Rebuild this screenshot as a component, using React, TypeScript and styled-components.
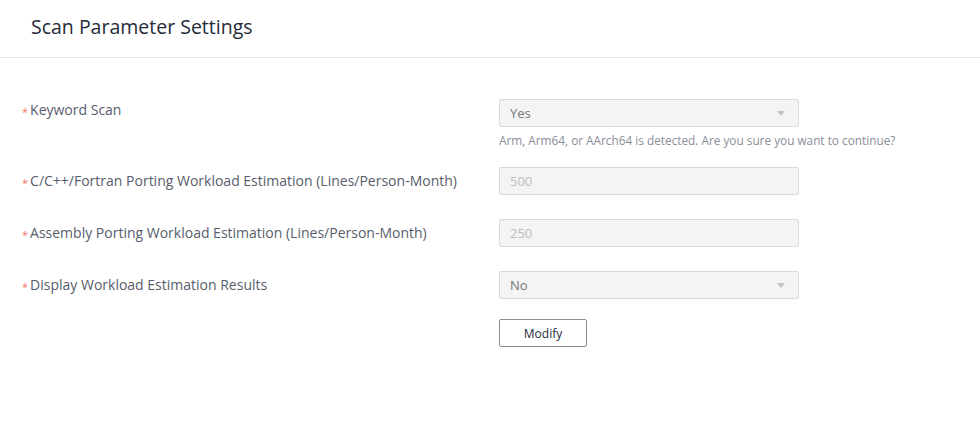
import React from "react";
import styled, { createGlobalStyle } from "styled-components";

const GlobalStyle = createGlobalStyle`
  html, body {
    margin: 0;
    padding: 0;
    background: #ffffff;
  }
  body {
    font-family: "Open Sans", "Noto Sans", sans-serif;
  }
`;

interface Field {
  label: string;
  kind: "select" | "input";
  value: string;
  hint?: string;
  spacing: number;
}

const fields: Field[] = [
  {
    label: "Keyword Scan",
    kind: "select",
    value: "Yes",
    hint: "Arm, Arm64, or AArch64 is detected. Are you sure you want to continue?",
    spacing: 0,
  },
  {
    label: "C/C++/Fortran Porting Workload Estimation (Lines/Person-Month)",
    kind: "input",
    value: "500",
    spacing: 20,
  },
  {
    label: "Assembly Porting Workload Estimation (Lines/Person-Month)",
    kind: "input",
    value: "250",
    spacing: 24,
  },
  {
    label: "Display Workload Estimation Results",
    kind: "select",
    value: "No",
    spacing: 24,
  },
];

const App: React.FC = () => {
  return (
    <Page>
      <GlobalStyle />
      <Header>
        <Title>Scan Parameter Settings</Title>
      </Header>
      <Form>
        {fields.map((field) => (
          <Row key={field.label} $spacing={field.spacing}>
            <Label $lift={field.hint ? 3 : 0}>
              <Required>*</Required>
              {field.label}
            </Label>
            <Control>
              <Box>
                <BoxText $muted={field.kind === "input"}>{field.value}</BoxText>
                {field.kind === "select" && <Caret />}
              </Box>
              {field.hint && <Hint>{field.hint}</Hint>}
            </Control>
          </Row>
        ))}
        <Row $spacing={20}>
          <Label $lift={0} />
          <Control>
            <Button type="button">Modify</Button>
          </Control>
        </Row>
      </Form>
    </Page>
  );
};

export default App;

//MARK: - Styled Components

const Page = styled.div`
  width: 980px;
  height: 431px;
  background: #ffffff;
`;

const Header = styled.header`
  height: 58px;
  box-sizing: border-box;
  padding: 13px 0 0 31px;
  border-bottom: 1px solid #e2e2e2;
`;

const Title = styled.h1`
  margin: 0;
  font-size: 19.5px;
  font-weight: 400;
  line-height: 28px;
  color: #252b3a;
`;

const Form = styled.div`
  display: flex;
  flex-direction: column;
  padding: 41px 0 0 22px;
`;

const Row = styled.div<{ $spacing: number }>`
  display: flex;
  align-items: flex-start;
  margin-top: ${(p) => p.$spacing}px;
`;

const Label = styled.div<{ $lift: number }>`
  width: 477px;
  flex-shrink: 0;
  display: flex;
  align-items: center;
  font-size: 14px;
  line-height: 28px;
  color: #575d6c;
  margin-top: ${(p) => -p.$lift}px;
`;

const Required = styled.span`
  color: #f66f6a;
  font-size: 11px;
  margin-right: 2px;
  position: relative;
  top: 2px;
`;

const Control = styled.div`
  width: 300px;
  display: flex;
  flex-direction: column;
`;

const Box = styled.div`
  height: 28px;
  box-sizing: border-box;
  border: 1px solid #d9d9d9;
  border-radius: 2px;
  background: #f4f4f4;
  display: flex;
  align-items: center;
  justify-content: space-between;
  padding: 0 13px 0 10px;
`;

const BoxText = styled.span<{ $muted: boolean }>`
  font-size: 13px;
  color: ${(p) => (p.$muted ? "#bdbdbd" : "#777777")};
`;

const Caret = styled.span`
  width: 0;
  height: 0;
  border-left: 4px solid transparent;
  border-right: 4px solid transparent;
  border-top: 5px solid #c4c4c4;
`;

const Hint = styled.div`
  margin-top: 6px;
  font-size: 11.8px;
  line-height: 14px;
  color: #8a8e99;
  white-space: nowrap;
`;

const Button = styled.button`
  width: 88px;
  height: 28px;
  box-sizing: border-box;
  border: 1px solid #8a8e99;
  border-radius: 2px;
  background: #ffffff;
  font-family: "Open Sans", "Noto Sans", sans-serif;
  font-size: 12px;
  color: #252b3a;
  padding: 0;
`;
